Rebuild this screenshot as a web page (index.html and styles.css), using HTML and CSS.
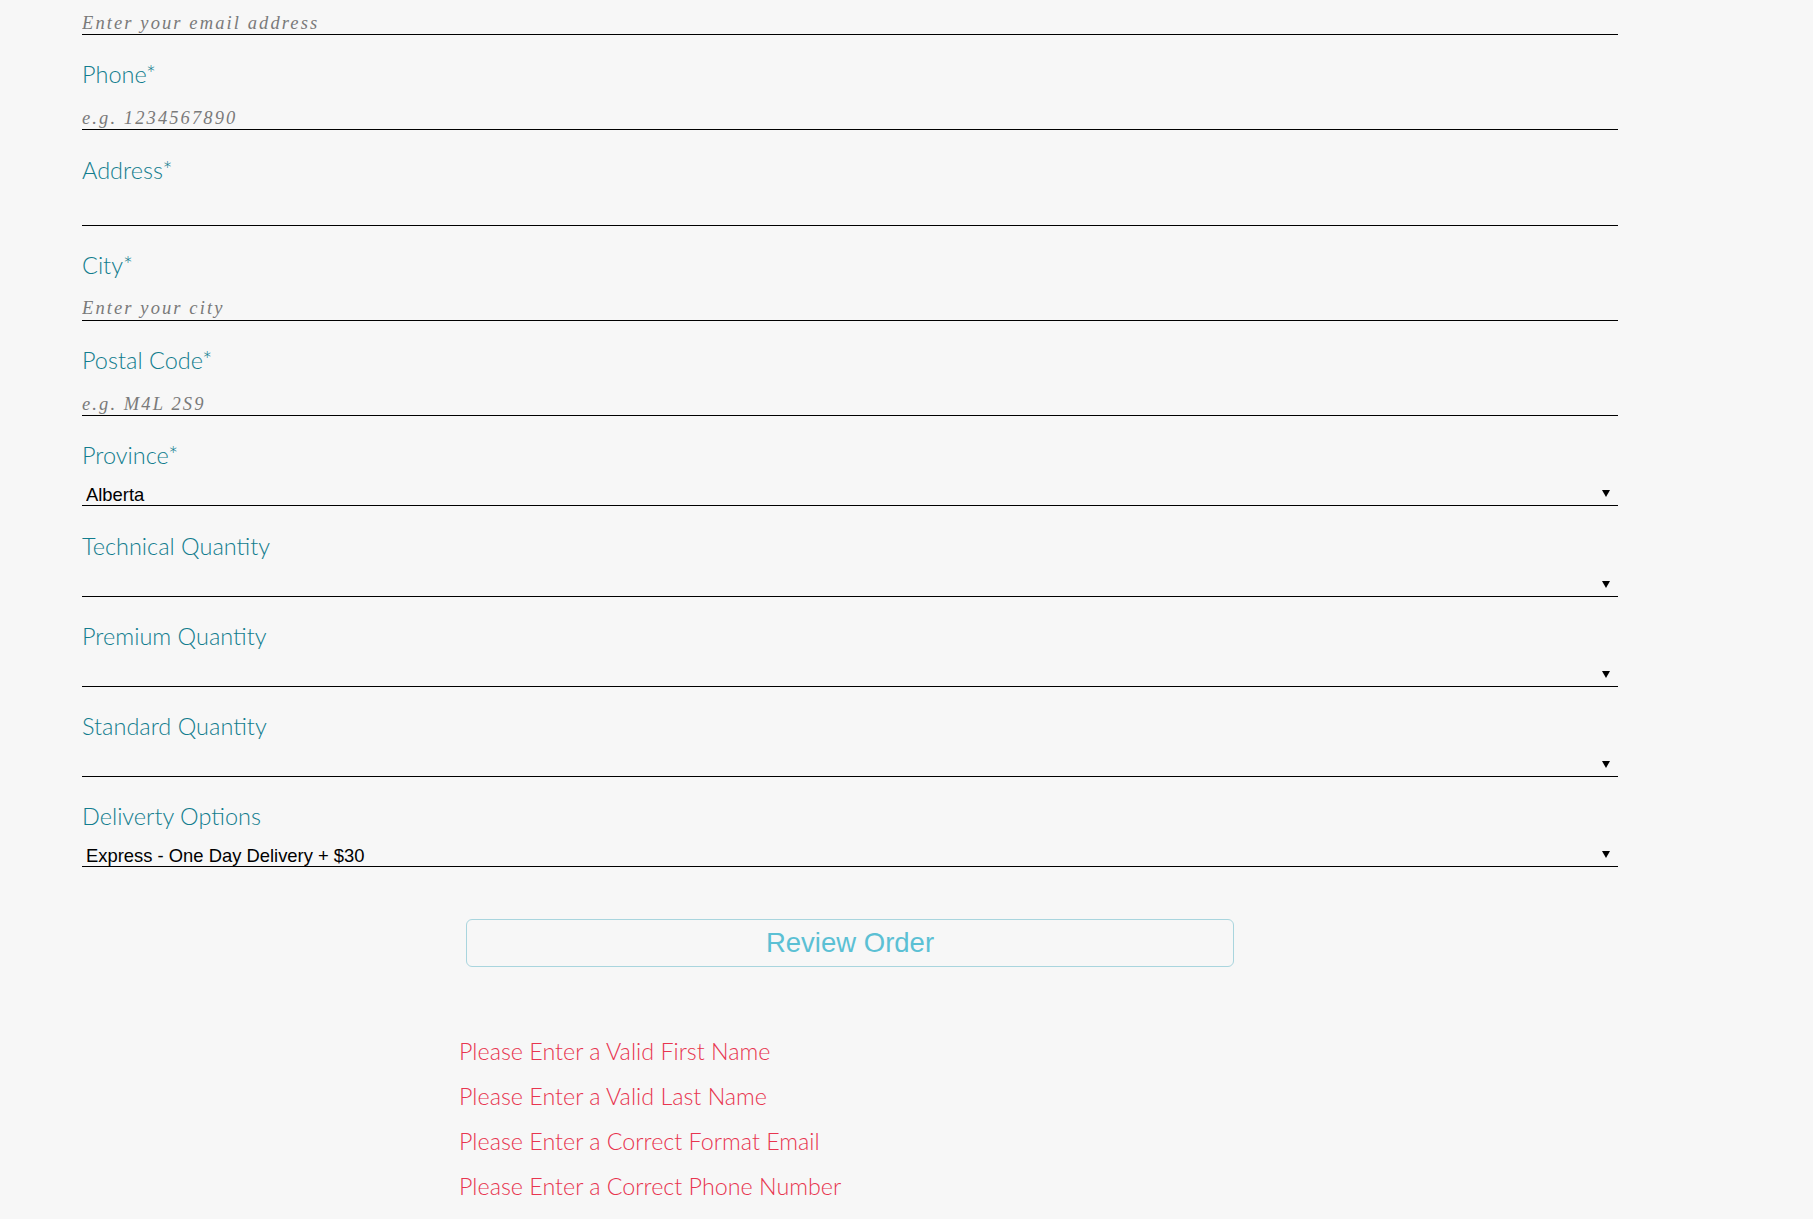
FILE: index.html
```html
<!DOCTYPE html>
<html lang="en">
<head>
<meta charset="utf-8">
<title>Order Form</title>
<link rel="stylesheet" href="styles.css">
</head>
<body>
<form class="order-form">
  <div class="field field-first">
    <input class="text-input text-input-first" type="email" placeholder="Enter your email address">
  </div>
  <div class="field">
    <label class="field-label">Phone*</label>
    <input class="text-input" type="tel" placeholder="e.g. 1234567890">
  </div>
  <div class="field">
    <label class="field-label">Address*</label>
    <input class="text-input" type="text">
  </div>
  <div class="field">
    <label class="field-label">City*</label>
    <input class="text-input" type="text" placeholder="Enter your city">
  </div>
  <div class="field">
    <label class="field-label">Postal Code*</label>
    <input class="text-input" type="text" placeholder="e.g. M4L 2S9">
  </div>
  <div class="field field-select">
    <label class="field-label">Province*</label>
    <div class="select-wrap">
      <select class="select-input">
        <option>Alberta</option>
        <option>British Columbia</option>
        <option>Manitoba</option>
        <option>Ontario</option>
      </select>
      <span class="select-arrow"></span>
    </div>
  </div>
  <div class="field field-select">
    <label class="field-label">Technical Quantity</label>
    <div class="select-wrap">
      <select class="select-input">
        <option></option>
        <option>1</option>
        <option>2</option>
      </select>
      <span class="select-arrow"></span>
    </div>
  </div>
  <div class="field field-select">
    <label class="field-label">Premium Quantity</label>
    <div class="select-wrap">
      <select class="select-input">
        <option></option>
        <option>1</option>
        <option>2</option>
      </select>
      <span class="select-arrow"></span>
    </div>
  </div>
  <div class="field field-select">
    <label class="field-label">Standard Quantity</label>
    <div class="select-wrap">
      <select class="select-input">
        <option></option>
        <option>1</option>
        <option>2</option>
      </select>
      <span class="select-arrow"></span>
    </div>
  </div>
  <div class="field field-select">
    <label class="field-label">Deliverty Options</label>
    <div class="select-wrap">
      <select class="select-input">
        <option>Express - One Day Delivery + $30</option>
        <option>Standard - Free Delivery</option>
      </select>
      <span class="select-arrow"></span>
    </div>
  </div>
  <div class="actions">
    <button type="button" class="review-btn">Review Order</button>
  </div>
  <ul class="errors">
    <li class="error">Please Enter a Valid First Name</li>
    <li class="error">Please Enter a Valid Last Name</li>
    <li class="error">Please Enter a Correct Format Email</li>
    <li class="error">Please Enter a Correct Phone Number</li>
  </ul>
</form>
</body>
</html>
```
FILE: styles.css
```css
html, body {
  margin: 0;
  padding: 0;
  background: #f7f7f7;
}

body {
  font-family: "Lato", "Liberation Sans", sans-serif;
}

.order-form {
  width: 1536px;
  margin-left: 82px;
  display: flex;
  flex-direction: column;
}

.field {
  display: flex;
  flex-direction: column;
  padding-top: 24.25px;
}

.field-first {
  padding-top: 0;
}

.field-label {
  display: block;
  font-family: "Lato", "Liberation Sans", sans-serif;
  font-weight: 300;
  font-size: 23.5px;
  line-height: 30px;
  height: 30px;
  color: #127d8e;
  margin-left: 0;
}

.text-input {
  box-sizing: border-box;
  display: block;
  width: 100%;
  height: 41px;
  margin: 0;
  padding: 18px 0 0 0;
  border: none;
  border-bottom: 1px solid #000;
  border-radius: 0;
  background: transparent;
  outline: none;
  font-family: "Liberation Serif", "Times New Roman", serif;
  font-style: italic;
  font-size: 18.5px;
  line-height: 22px;
  letter-spacing: 2.1px;
  color: #333;
}

.text-input-first {
  height: 35px;
  padding-top: 12px;
}

.text-input::placeholder {
  color: #7a7a7a;
  font-style: italic;
}

.select-wrap {
  position: relative;
}

.select-input {
  box-sizing: border-box;
  display: block;
  width: 100%;
  height: 36px;
  margin: 0;
  padding: 14px 0 0 4px;
  border: none;
  border-bottom: 1px solid #000;
  border-radius: 0;
  background: transparent;
  outline: none;
  -webkit-appearance: none;
  appearance: none;
  font-family: "Liberation Sans", Arial, sans-serif;
  font-size: 18.4px;
  line-height: 21px;
  color: #000;
}

.select-arrow {
  position: absolute;
  right: 8px;
  bottom: 9px;
  width: 0;
  height: 0;
  border-left: 4px solid transparent;
  border-right: 4px solid transparent;
  border-top: 7px solid #000;
  pointer-events: none;
}

.actions {
  display: flex;
  justify-content: center;
  margin-top: 52px;
}

.review-btn {
  box-sizing: border-box;
  width: 768px;
  height: 48px;
  margin: 0;
  padding: 0;
  border: 1px solid #a9d5de;
  border-radius: 6px;
  background: transparent;
  color: #5bc0d4;
  font-family: "Liberation Sans", Arial, sans-serif;
  font-size: 27.5px;
  line-height: 46px;
  cursor: pointer;
}

.errors {
  list-style: none;
  margin: 62px 0 0 0;
  padding: 0 0 0 377px;
}

.error {
  font-family: "Lato", "Liberation Sans", sans-serif;
  font-weight: 300;
  font-size: 23.3px;
  line-height: 45px;
  color: #e8354f;
}
```
